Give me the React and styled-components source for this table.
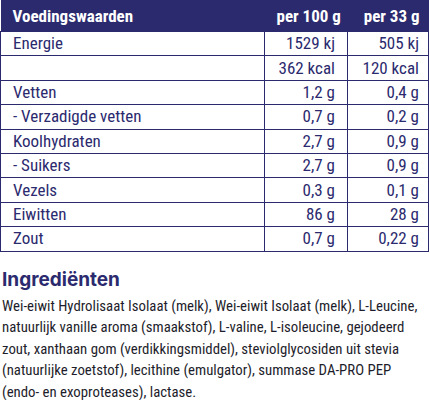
import React from 'react';
import styled, { createGlobalStyle } from 'styled-components';

const GlobalStyle = createGlobalStyle`
  body {
    margin: 0;
    background: #fff;
    font-family: "Roboto Condensed", "Roboto", sans-serif;
  }
`;

const navy = '#2b2a6e';

const Page = styled.div`
  width: 430px;
  color: ${navy};
`;

const Table = styled.table`
  width: 428px;
  border-collapse: collapse;
  table-layout: fixed;
  font-size: 17px;
`;

const HeadCell = styled.th`
  background: ${navy};
  color: #fff;
  height: 31px;
  padding: 0 ${p => p.$pad || '12px'} 0 12px;
  text-align: ${p => (p.$num ? 'right' : 'left')};
  font-weight: 700;
  font-size: 17px;
  white-space: nowrap;
`;

const Cell = styled.td`
  height: 23.4px;
  padding: 0 ${p => p.$pad || '12px'} 0 12px;
  border: 1px solid ${navy};
  text-align: ${p => (p.$num ? 'right' : 'left')};
  white-space: nowrap;
  line-height: 1;
`;

const Ingredients = styled.section`
  padding: 16px 2px 0;
`;

const Title = styled.h2`
  margin: 0 0 4px;
  font-family: "Inter", "Lato", sans-serif;
  font-weight: 700;
  font-size: 19px;
  line-height: 24px;
  color: ${navy};
`;

const Text = styled.p`
  margin: 0;
  font-size: 14.8px;
  line-height: 21.5px;
  color: #1d1d2b;
  white-space: nowrap;
`;

const rows = [
  ['Energie', '1529 kj', '505 kj'],
  ['', '362 kcal', '120 kcal'],
  ['Vetten', '1,2 g', '0,4 g'],
  ['- Verzadigde vetten', '0,7 g', '0,2 g'],
  ['Koolhydraten', '2,7 g', '0,9 g'],
  ['- Suikers', '2,7 g', '0,9 g'],
  ['Vezels', '0,3 g', '0,1 g'],
  ['Eiwitten', '86 g', '28 g'],
  ['Zout', '0,7 g', '0,22 g'],
];

const lines = [
  'Wei-eiwit Hydrolisaat Isolaat (melk), Wei-eiwit Isolaat (melk), L-Leucine,',
  'natuurlijk vanille aroma (smaakstof), L-valine, L-isoleucine, gejodeerd',
  'zout, xanthaan gom (verdikkingsmiddel), steviolglycosiden uit stevia',
  '(natuurlijke zoetstof), lecithine (emulgator), summase DA-PRO PEP',
  '(endo- en exoproteases), lactase.',
];

export default function App() {
  return (
    <Page>
      <GlobalStyle />
      <Table>
        <colgroup>
          <col style={{ width: 264 }} />
          <col style={{ width: 83 }} />
          <col style={{ width: 81 }} />
        </colgroup>
        <thead>
          <tr>
            <HeadCell>Voedingswaarden</HeadCell>
            <HeadCell $num $pad="12px">per 100 g</HeadCell>
            <HeadCell $num $pad="9px">per 33 g</HeadCell>
          </tr>
        </thead>
        <tbody>
          {rows.map((r, i) => (
            <tr key={i}>
              <Cell>{r[0]}</Cell>
              <Cell $num $pad="12px">{r[1]}</Cell>
              <Cell $num $pad="9px">{r[2]}</Cell>
            </tr>
          ))}
        </tbody>
      </Table>
      <Ingredients>
        <Title>Ingrediënten</Title>
        <Text>
          {lines.map((l, i) => (
            <React.Fragment key={i}>
              {l}
              {i < lines.length - 1 && <br />}
            </React.Fragment>
          ))}
        </Text>
      </Ingredients>
    </Page>
  );
}
